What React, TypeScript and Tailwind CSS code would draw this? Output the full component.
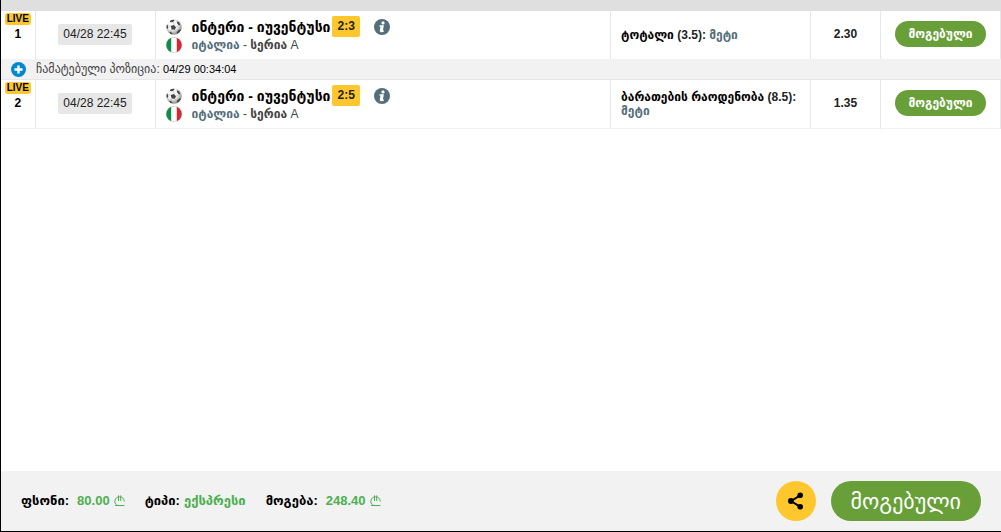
type Bet = {
  id: number;
  date: string;
  match: string;
  score: string;
  country: string;
  league: string;
  market: string;
  line: string;
  pick: string;
  odds: string;
};

const bets: Bet[] = [
  {
    id: 1,
    date: '04/28 22:45',
    match: 'ინტერი - იუვენტუსი',
    score: '2:3',
    country: 'იტალია',
    league: 'სერია',
    market: 'ტოტალი',
    line: '(3.5):',
    pick: 'მეტი',
    odds: '2.30'
  },
  {
    id: 2,
    date: '04/28 22:45',
    match: 'ინტერი - იუვენტუსი',
    score: '2:5',
    country: 'იტალია',
    league: 'სერია',
    market: 'ბარათების რაოდენობა',
    line: '(8.5):',
    pick: 'მეტი',
    odds: '1.35'
  }
];

function BallIcon() {
  return (
    <svg viewBox="0 0 16 16" className="size-4 shrink-0" aria-hidden="true">
      <defs>
        <radialGradient id="ball" cx="0.4" cy="0.35" r="0.65">
          <stop offset="0.5" stopColor="#f6f6f6" />
          <stop offset="1" stopColor="#8d8d8d" />
        </radialGradient>
        <clipPath id="ball-clip">
          <circle cx="8" cy="8" r="7.8" />
        </clipPath>
      </defs>
      <circle cx="8" cy="8" r="7.8" fill="url(#ball)" />
      <g clipPath="url(#ball-clip)" fill="#444">
        <path d="M4.8 7 8 6 10 8.2 8.8 10.8 5.6 10.4z" />
        <path d="M4.2 1.6 7.4.6 8.6 1.8 6.2 3.2 4 3z" />
        <path d="M10.8 2.2 13.4 3.4 14.2 6.6 12.2 5.8 11 4z" />
        <path d="M.4 6.2 1.6 5.4 2.2 8.2 1.4 10 .4 9.6z" />
        <path d="M3.4 12.8 6 13.8 6.8 15.6 3.8 14.8z" />
        <path d="M11.6 12 14.2 10 14.8 11.6 11.8 14.8 10.6 14z" />
        <path
          d="M8 6 7.6 2.8M10 8.2 12.8 6.2M8.8 10.8 11.2 12.8M5.6 10.4 4.8 13.2M4.8 7 1.8 7"
          fill="none"
          stroke="#999"
          strokeWidth="0.4"
        />
      </g>
    </svg>
  );
}

function ItalyFlag() {
  return (
    <svg viewBox="0 0 16 16" className="size-4 shrink-0" aria-hidden="true">
      <clipPath id="flag-clip">
        <circle cx="8" cy="8" r="7.8" />
      </clipPath>
      <g clipPath="url(#flag-clip)">
        <path fill="#fff" d="M0 0h16v16H0z" />
        <path fill="#0b8f48" d="M0 0h5.2v16H0z" />
        <path fill="#dc2430" d="M10.8 0H16v16h-5.2z" />
      </g>
      <circle cx="8" cy="8" r="7.6" fill="none" stroke="#8a8a8a" strokeOpacity="0.5" strokeWidth="0.6" />
    </svg>
  );
}

function InfoIcon() {
  return (
    <svg viewBox="0 0 16 16" className="size-4" aria-hidden="true">
      <circle cx="8" cy="8" r="8" fill="#546e7a" />
      <circle cx="9" cy="3.9" r="1.6" fill="#fff" />
      <path fill="#fff" d="M5.6 6.2H9.9L8.9 11.4H10.1L9.8 12.8C8 13.4 5.4 13.4 5.8 11.4L6.5 7.5H5.3z" />
    </svg>
  );
}

function PlusIcon() {
  return (
    <svg viewBox="0 0 15 15" className="size-[15px]" aria-hidden="true">
      <circle cx="7.5" cy="7.5" r="7.5" fill="#0288d1" />
      <path d="M7.5 3.4V11.6M3.4 7.5H11.6" stroke="#fff" strokeWidth="2.4" />
    </svg>
  );
}

function LariIcon() {
  return (
    <svg viewBox="0 0 11 12" className="h-3 w-[11px]" fill="none" stroke="currentColor" role="img" aria-label="GEL">
      <path d="M10.4 6.4C10 3.4 8 1.8 5.6 1.8 3 1.8.8 3.6.8 6.4.8 8.6 2 10.2 4 10.5H10.4" />
      <path d="M1 10.5H4M4.5.4V6M6.7.4V6" />
    </svg>
  );
}

function ShareIcon() {
  return (
    <svg viewBox="0 0 16 18" className="h-[18px] w-4" aria-hidden="true">
      <path d="M12.4 3.4 3 9l9.4 5.8" fill="none" stroke="#000" strokeWidth="2" />
      <circle cx="12.2" cy="3.3" r="2.8" />
      <circle cx="2.9" cy="9" r="2.9" />
      <circle cx="12.2" cy="14.7" r="2.8" />
    </svg>
  );
}

function BetRow({ bet }: { bet: Bet }) {
  return (
    <tr className="h-[49px] border-t border-[#e7e7e7] first:h-12 first:border-t-0">
      <td className="border-r border-[#e7e7e7] align-top">
        <div className="mt-0.5 flex flex-col items-center">
          <span className="rounded-[3px] bg-[#fec72e] px-0.5 text-[10px] leading-3 font-bold">LIVE</span>
          <span className="text-xs leading-[18px] font-bold">{bet.id}</span>
        </div>
      </td>
      <td className="border-r border-[#e7e7e7] pb-0.5">
        <time className="mx-auto block w-fit rounded-xs bg-[#e7e7e7] px-[5px] text-xs leading-[21px] text-[#222]">{bet.date}</time>
      </td>
      <td className="border-r border-[#e7e7e7] pb-px pl-[10px]">
        <div className="flex items-center">
          <BallIcon />
          <span className="ml-[10px] text-sm leading-5 font-bold whitespace-nowrap">{bet.match}</span>
          <span className="ml-0.5 rounded-xs bg-[#fec72e] px-[5px] text-xs leading-[21px] font-bold text-[#222]">{bet.score}</span>
          <button type="button" aria-label="ინფორმაცია" className="ml-[14px]">
            <InfoIcon />
          </button>
        </div>
        <div className="flex items-center">
          <ItalyFlag />
          <p className="ml-[10px] text-xs leading-4 text-[#444]">
            <b className="text-[#546e7a]">{bet.country}</b> - <b>{bet.league}</b> A
          </p>
        </div>
      </td>
      <td className="border-r border-[#e7e7e7] px-[10px] text-xs leading-[14px] font-bold">
        {bet.market} <span className="text-[#222]">{bet.line}</span> <span className="text-[#546e7a]">{bet.pick}</span>
      </td>
      <td className="border-r border-[#e7e7e7] pb-0.5 text-center text-xs font-bold text-[#222]">{bet.odds}</td>
      <td className="border-r border-[#e7e7e7] pb-0.5">
        <span className="mx-auto block w-fit rounded-full bg-[#689f38] px-[13px] text-xs leading-[26px] font-bold text-white">
          მოგებული
        </span>
      </td>
    </tr>
  );
}

export default function App() {
  return (
    <main className="flex min-h-screen flex-col border-b border-l border-black bg-white font-['Liberation_Sans','DejaVu_Sans',sans-serif] text-black">
      <div className="h-[11px] bg-[#dfdfdf]" />

      <table className="w-full table-fixed border-collapse border-b border-[#f2f2f2]">
        <colgroup>
          <col className="w-[34px]" />
          <col className="w-[120px]" />
          <col />
          <col className="w-[200px]" />
          <col className="w-[70px]" />
          <col className="w-[120px]" />
        </colgroup>
        <tbody>
          <BetRow bet={bets[0]} />
          <tr className="h-5 bg-[#f2f2f2]">
            <td colSpan={6}>
              <div className="flex items-center pl-[10px] text-xs leading-5 text-[#444]">
                <button type="button" aria-label="დამატება">
                  <PlusIcon />
                </button>
                <p className="ml-[10px]">
                  ჩამატებული პოზიცია: <span className="text-[11px] text-black">04/29 00:34:04</span>
                </p>
              </div>
            </td>
          </tr>
          <BetRow bet={bets[1]} />
        </tbody>
      </table>

      <footer className="mt-auto flex h-[60px] items-center justify-between bg-[#f2f2f2] px-5">
        <dl className="flex gap-5 text-[13px] leading-5 font-bold">
          <div className="flex gap-2">
            <dt>ფსონი:</dt>
            <dd className="flex items-center gap-1 text-[#4caf50]">
              80.00 <LariIcon />
            </dd>
          </div>
          <div className="flex gap-1">
            <dt>ტიპი:</dt>
            <dd className="text-[#4caf50]">ექსპრესი</dd>
          </div>
          <div className="flex gap-2">
            <dt>მოგება:</dt>
            <dd className="flex items-center gap-1 text-[#4caf50]">
              248.40 <LariIcon />
            </dd>
          </div>
        </dl>
        <div className="flex gap-[15px]">
          <button type="button" aria-label="გაზიარება" className="flex size-10 items-center justify-center rounded-full bg-[#fec72e]">
            <ShareIcon />
          </button>
          <button type="button" className="h-10 rounded-full bg-[#689f38] px-5 text-[22px] text-white uppercase">
            მოგებული
          </button>
        </div>
      </footer>
    </main>
  );
}
